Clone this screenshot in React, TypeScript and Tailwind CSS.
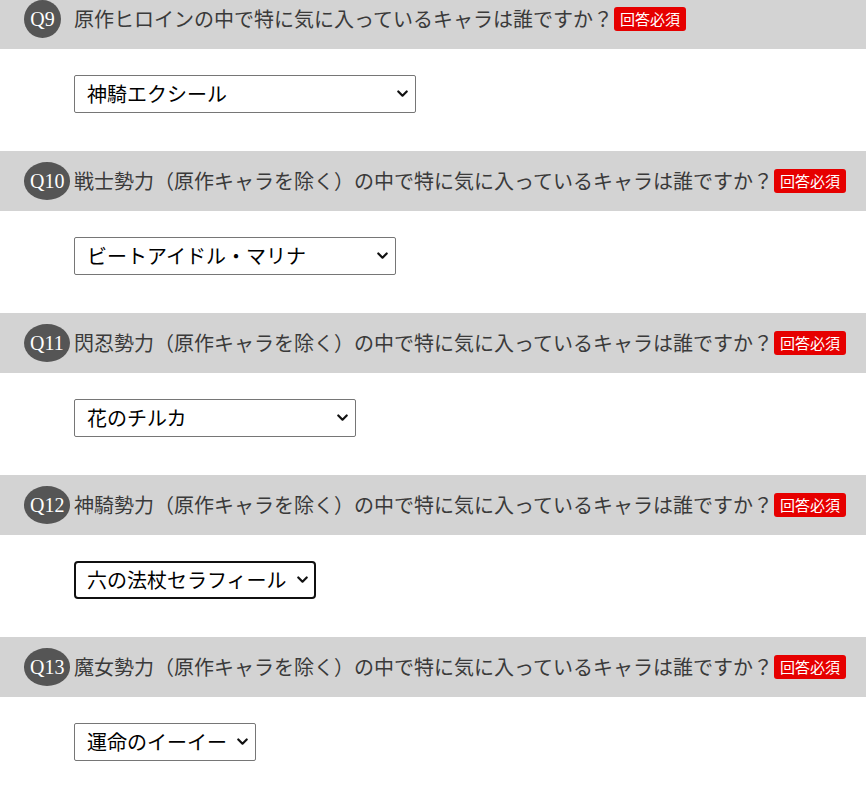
import { useState } from "react";

type Question = {
  no: string;
  text: string;
  options: string[];
  value: string;
  width: string;
  focused?: boolean;
};

const questions: Question[] = [
  {
    no: "Q9",
    text: "原作ヒロインの中で特に気に入っているキャラは誰ですか？",
    options: ["神騎エクシール", "魔女スザク"],
    value: "神騎エクシール",
    width: "w-[342px]",
  },
  {
    no: "Q10",
    text: "戦士勢力（原作キャラを除く）の中で特に気に入っているキャラは誰ですか？",
    options: ["ビートアイドル・マリナ"],
    value: "ビートアイドル・マリナ",
    width: "w-[322px]",
  },
  {
    no: "Q11",
    text: "閃忍勢力（原作キャラを除く）の中で特に気に入っているキャラは誰ですか？",
    options: ["花のチルカ"],
    value: "花のチルカ",
    width: "w-[282px]",
  },
  {
    no: "Q12",
    text: "神騎勢力（原作キャラを除く）の中で特に気に入っているキャラは誰ですか？",
    options: ["六の法杖セラフィール"],
    value: "六の法杖セラフィール",
    width: "w-[242px]",
    focused: true,
  },
  {
    no: "Q13",
    text: "魔女勢力（原作キャラを除く）の中で特に気に入っているキャラは誰ですか？",
    options: ["運命のイーイー"],
    value: "運命のイーイー",
    width: "w-[182px]",
  },
];

const Chevron = () => (
  <svg width="11" height="8" viewBox="0 0 11 8" className="pointer-events-none absolute right-[8px] top-1/2 -translate-y-1/2">
    <path d="M1.3 1.5 L5.5 5.7 L9.7 1.5" fill="none" stroke="#111" strokeWidth="2.2" strokeLinecap="round" strokeLinejoin="round" />
  </svg>
);

const QuestionBlock = ({ q }: { q: Question }) => {
  const [value, setValue] = useState(q.value);
  return (
    <section>
      <div className="flex h-[60px] items-center bg-[#d3d3d3] pl-[24px]">
        <div className="w-[50px] shrink-0">
          <span className="inline-flex h-[38px] min-w-[37px] items-center justify-center rounded-[50%] bg-[#555555] px-[6px] font-['Liberation_Serif',serif] text-[20px] text-white">
            {q.no}
          </span>
        </div>
        <p className="text-[20px] text-[#3a3a3a]">{q.text}</p>
        <span className="ml-[1px] rounded-[3px] bg-[#e60000] px-[6px] py-[1px] text-[15px] leading-[22px] text-white">回答必須</span>
      </div>
      <div className="pb-[38px] pl-[74px] pt-[26px]">
        <div className={`relative ${q.width}`}>
          <select
            value={value}
            onChange={(e) => setValue(e.target.value)}
            className={
              q.focused
                ? "h-[38px] w-full appearance-none rounded-[4px] border-2 border-[#101010] bg-white pl-[11px] text-[20px] text-black outline-none"
                : "h-[38px] w-full appearance-none rounded-[2px] border border-[#767676] bg-white pl-[12px] text-[20px] text-black outline-none"
            }
          >
            {q.options.map((o) => (
              <option key={o}>{o}</option>
            ))}
          </select>
          <Chevron />
        </div>
      </div>
    </section>
  );
};

export default function App() {
  return (
    <div className="h-[799px] w-[866px] overflow-hidden bg-white font-['Noto_Sans_CJK_JP','Noto_Sans',sans-serif]">
      <div className="mt-[-11px]">
        {questions.map((q) => (
          <QuestionBlock key={q.no} q={q} />
        ))}
      </div>
    </div>
  );
}
